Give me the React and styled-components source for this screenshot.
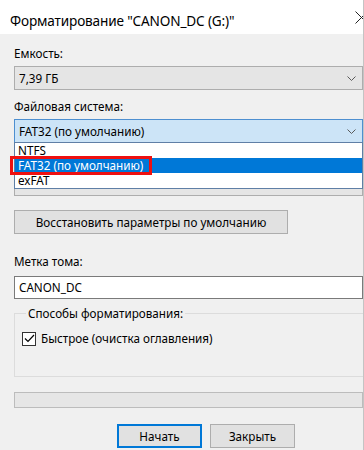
import React from 'react';
import styled, { createGlobalStyle } from 'styled-components';

const GlobalStyle = createGlobalStyle`
  html, body {
    margin: 0;
    padding: 0;
    background: #ffffff;
  }
  * {
    box-sizing: border-box;
  }
`;

const Dialog = styled.div`
  width: 364px;
  height: 450px;
  overflow: hidden;
  display: flex;
  flex-direction: column;
  font-family: 'Noto Sans', 'Liberation Sans', sans-serif;
  color: #000;
  border-right: 1px solid #c4c4c4;
  background: #f0f0f0;
`;

const TitleBar = styled.div`
  height: 34px;
  flex: none;
  background: #fff;
  display: flex;
  align-items: center;
  padding-left: 10px;
  font-size: 13.6px;
  letter-spacing: -0.15px;
  overflow: hidden;
`;

const TitleText = styled.span`
  flex: 1;
  white-space: nowrap;
  padding-top: 6px;
`;

const CloseIcon = styled.svg`
  flex: none;
  width: 13px;
  height: 13px;
  margin-right: -5px;
`;

const Body = styled.div`
  flex: 1;
  padding: 12px 0 0 14px;
  display: flex;
  flex-direction: column;
  font-size: 11.7px;
  line-height: 15px;
`;

const Label = styled.div`
  height: 15px;
  margin-top: ${({ $top }) => $top || 0}px;
  margin-bottom: ${({ $gap }) => $gap || 5}px;
  white-space: nowrap;
`;

const ComboWrap = styled.div`
  position: relative;
`;

const Combo = styled.div`
  height: 24px;
  display: flex;
  align-items: center;
  justify-content: space-between;
  padding: 0 6px 0 4px;
  background: ${({ $open }) => ($open ? '#cce4f7' : '#e5e5e5')};
  border: 1px solid ${({ $open }) => ($open ? '#4d8fd0' : '#adadad')};
`;

const Chevron = styled.svg`
  width: 9px;
  height: 5px;
  margin-left: auto;
`;

const DropList = styled.div`
  position: absolute;
  left: 0;
  right: 0;
  top: 23px;
  background: #fff;
  border: 1px solid #5f7fa6;
  z-index: 2;
`;

const Option = styled.div`
  height: 15px;
  line-height: 15px;
  padding-left: 3px;
  background: ${({ $selected }) => ($selected ? '#0078d7' : 'transparent')};
  color: ${({ $selected }) => ($selected ? '#fff' : '#000')};
`;

const Marker = styled.div`
  position: absolute;
  left: -5px;
  top: 13px;
  width: 142px;
  height: 19px;
  border: 3px solid #ee1010;
  pointer-events: none;
`;

const Button = styled.div`
  height: 24px;
  display: flex;
  align-items: center;
  justify-content: center;
  background: #e1e1e1;
  border: 1px solid ${({ $default }) => ($default ? '#0078d7' : '#adadad')};
  box-shadow: ${({ $default }) => ($default ? 'inset 0 0 0 1px #0078d7' : 'none')};
  width: ${({ $width }) => $width}px;
  flex: none;
`;

const RestoreButton = styled(Button)`
  margin-top: 14px;
`;

const TextInput = styled.div`
  height: 23px;
  background: #fff;
  border: 1px solid #7a7a7a;
  display: flex;
  align-items: center;
  padding-left: 4px;
`;

const Group = styled.fieldset`
  margin: 7px 0 0 0;
  padding: 10px 0 30px 7px;
  border: 1px solid #dcdcdc;
  border-right: none;
  min-width: 0;
`;

const Legend = styled.legend`
  padding: 0 2px;
  margin-left: 4px;
  line-height: 15px;
`;

const CheckRow = styled.label`
  display: flex;
  align-items: center;
  gap: 5px;
`;

const CheckBox = styled.span`
  width: 14px;
  height: 14px;
  border: 1px solid #333;
  background: #fff;
  display: flex;
  align-items: center;
  justify-content: center;
`;

const Progress = styled.div`
  margin-top: 15px;
  height: 16px;
  background: #e6e6e6;
  border: 1px solid #bcbcbc;
`;

const ButtonRow = styled.div`
  margin-top: 16px;
  padding-left: 103px;
  display: flex;
  gap: 8px;
`;

const ChevronIcon = () => (
  <Chevron viewBox="0 0 9 5">
    <polyline points="0.5,0.5 4.5,4.5 8.5,0.5" fill="none" stroke="#5a5a5a" strokeWidth="1" />
  </Chevron>
);

export default function App() {
  return (
    <>
      <GlobalStyle />
      <Dialog>
        <TitleBar>
          <TitleText>Форматирование "CANON_DC (G:)"</TitleText>
          <CloseIcon viewBox="0 0 13 13">
            <path d="M0.5 0.5 L12.5 12.5 M12.5 0.5 L0.5 12.5" stroke="#222" strokeWidth="1" />
          </CloseIcon>
        </TitleBar>
        <Body>
          <Label>Емкость:</Label>
          <Combo>
            <span>7,39 ГБ</span>
            <ChevronIcon />
          </Combo>

          <Label $top={9}>Файловая система:</Label>
          <ComboWrap>
            <Combo $open>
              <span>FAT32 (по умолчанию)</span>
              <ChevronIcon />
            </Combo>
            <DropList>
              <Option>NTFS</Option>
              <Option $selected>FAT32 (по умолчанию)</Option>
              <Option>exFAT</Option>
              <Marker />
            </DropList>
          </ComboWrap>

          {/* cluster size row, covered by the open list */}
          <Label $top={9} />
          <Combo>
            <ChevronIcon />
          </Combo>

          <RestoreButton $width={274}>Восстановить параметры по умолчанию</RestoreButton>

          <Label $top={20} $gap={7}>Метка тома:</Label>
          <TextInput>CANON_DC</TextInput>

          <Group>
            <Legend>Способы форматирования:</Legend>
            <CheckRow>
              <CheckBox>
                <svg width="11" height="9" viewBox="0 0 11 9">
                  <polyline points="1,4.5 4,7.5 10,1" fill="none" stroke="#000" strokeWidth="1.2" />
                </svg>
              </CheckBox>
              Быстрое (очистка оглавления)
            </CheckRow>
          </Group>

          <Progress />

          <ButtonRow>
            <Button $default $width={85}>Начать</Button>
            <Button $width={85}>Закрыть</Button>
          </ButtonRow>
        </Body>
      </Dialog>
    </>
  );
}
